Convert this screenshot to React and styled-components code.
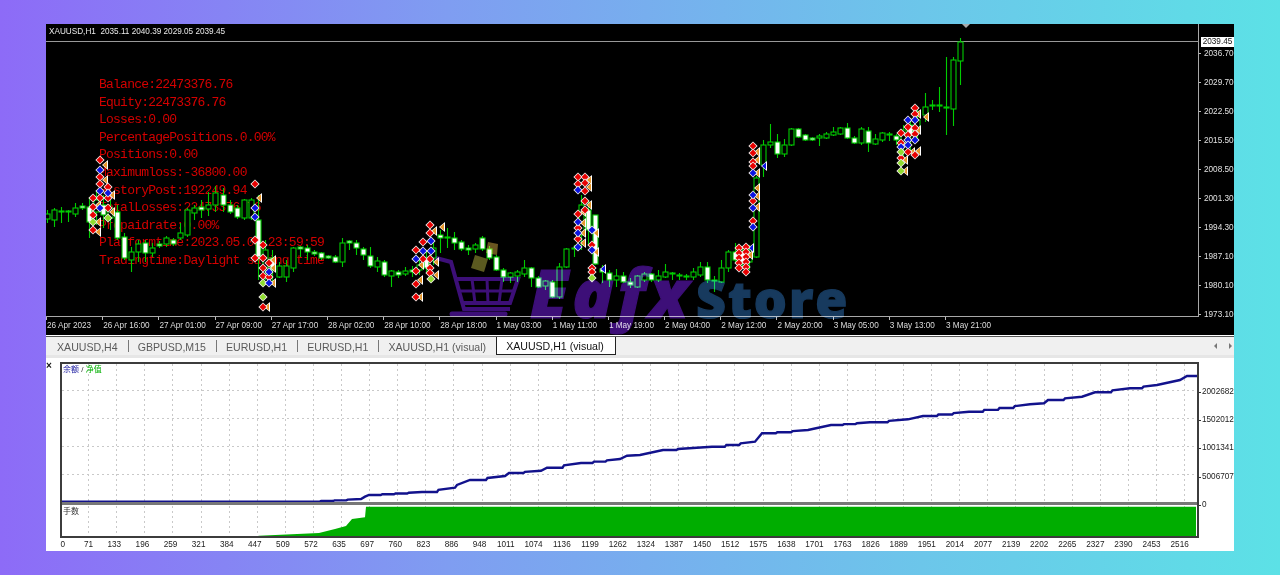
import { Fragment } from "react";
import styled, { createGlobalStyle } from "styled-components";

const GREEN = "#00cc00";
const RED = "#e80000";
const BLUE = "#0a14e0";
const LIME = "#8fdc30";

// [bar index, high, body top, body bottom, low, kind] in page pixels. h = hollow, w = white
const CANDLES = [
  [0, 210, 214, 219, 223, "h"], [1, 208, 210, 220, 227, "h"], [2, 207, 211, 212, 223, "w"], [3, 210, 211, 212, 222, "w"],
  [4, 203, 208, 214, 217, "h"], [5, 203, 206, 208, 210, "w"], [6, 197, 207, 222, 238, "w"], [7, 190, 200, 212, 225, "h"],
  [8, 195, 205, 215, 228, "w"], [9, 200, 208, 218, 230, "h"], [10, 205, 212, 238, 240, "w"], [11, 233, 237, 258, 260, "w"],
  [12, 247, 252, 260, 272, "h"], [13, 240, 244, 252, 262, "h"], [14, 240, 243, 253, 262, "w"], [15, 243, 248, 253, 257, "h"],
  [16, 241, 244, 246, 248, "w"], [17, 236, 238, 244, 247, "h"], [18, 238, 240, 244, 246, "w"], [19, 223, 233, 238, 240, "h"],
  [20, 208, 210, 235, 237, "h"], [21, 205, 208, 213, 220, "h"], [22, 200, 207, 210, 218, "w"], [23, 192, 205, 209, 216, "h"],
  [24, 186, 193, 205, 212, "h"], [25, 188, 195, 205, 212, "w"], [26, 200, 205, 212, 214, "w"], [27, 205, 208, 217, 219, "w"],
  [28, 199, 200, 218, 220, "h"], [29, 198, 200, 218, 220, "h"], [30, 195, 220, 257, 280, "w"], [31, 240, 250, 268, 280, "h"],
  [32, 250, 258, 270, 285, "w"], [33, 262, 266, 277, 278, "h"], [34, 260, 266, 277, 282, "h"], [35, 247, 248, 268, 272, "h"],
  [36, 246, 247, 249, 257, "w"], [37, 245, 248, 252, 260, "w"], [38, 250, 252, 254, 256, "w"], [39, 252, 253, 258, 260, "w"],
  [40, 255, 256, 258, 259, "w"], [41, 255, 257, 262, 263, "w"], [42, 238, 243, 262, 267, "h"], [43, 240, 241, 243, 250, "w"],
  [44, 240, 243, 248, 255, "w"], [45, 247, 249, 255, 260, "w"], [46, 247, 256, 266, 268, "w"], [47, 257, 261, 267, 272, "h"],
  [48, 260, 262, 275, 277, "w"], [49, 270, 271, 276, 287, "h"], [50, 270, 272, 275, 278, "w"], [51, 267, 271, 274, 276, "h"],
  [52, 266, 270, 272, 277, "w"], [53, 260, 265, 270, 275, "h"], [54, 250, 258, 268, 272, "w"], [55, 240, 248, 258, 265, "h"],
  [56, 230, 235, 238, 253, "w"], [57, 228, 237, 238, 248, "w"], [58, 232, 238, 243, 250, "w"], [59, 240, 242, 249, 251, "w"],
  [60, 245, 248, 250, 255, "w"], [61, 243, 245, 249, 253, "h"], [62, 236, 238, 249, 251, "w"], [63, 246, 249, 258, 260, "w"],
  [64, 255, 257, 270, 271, "w"], [65, 268, 270, 277, 282, "w"], [66, 272, 273, 277, 283, "h"], [67, 270, 272, 276, 282, "h"],
  [68, 260, 268, 274, 277, "h"], [69, 267, 268, 278, 287, "w"], [70, 276, 278, 287, 288, "w"], [71, 280, 281, 286, 290, "h"],
  [72, 280, 282, 297, 298, "w"], [73, 263, 267, 297, 299, "h"], [74, 248, 249, 267, 268, "h"], [75, 245, 248, 249, 257, "w"],
  [76, 195, 205, 235, 250, "h"], [77, 200, 210, 230, 245, "w"], [78, 215, 215, 264, 265, "w"], [79, 265, 269, 272, 283, "w"],
  [80, 270, 273, 280, 287, "w"], [81, 269, 276, 280, 287, "h"], [82, 272, 276, 282, 283, "w"], [83, 278, 282, 285, 288, "w"],
  [84, 275, 276, 287, 288, "h"], [85, 272, 274, 280, 282, "h"], [86, 273, 274, 280, 282, "w"], [87, 270, 276, 280, 282, "h"],
  [88, 264, 272, 277, 278, "h"], [89, 272, 273, 274, 280, "w"], [90, 273, 275, 276, 280, "w"], [91, 274, 276, 277, 280, "w"],
  [92, 268, 272, 277, 280, "h"], [93, 262, 267, 275, 277, "h"], [94, 262, 267, 280, 283, "w"], [95, 276, 280, 281, 292, "w"],
  [96, 260, 268, 282, 283, "h"], [97, 250, 252, 268, 272, "h"], [98, 243, 252, 260, 262, "w"], [99, 248, 252, 262, 268, "w"],
  [100, 245, 250, 262, 270, "h"], [101, 176, 178, 257, 258, "h"], [102, 140, 145, 165, 177, "h"], [103, 124, 142, 145, 148, "h"],
  [104, 134, 142, 154, 158, "w"], [105, 139, 145, 154, 157, "h"], [106, 128, 129, 145, 146, "h"], [107, 128, 129, 137, 138, "w"],
  [108, 134, 135, 140, 141, "w"], [109, 137, 138, 140, 141, "w"], [110, 134, 136, 138, 146, "h"], [111, 132, 134, 138, 139, "h"],
  [112, 127, 132, 135, 136, "h"], [113, 127, 128, 134, 135, "h"], [114, 123, 128, 138, 139, "w"], [115, 136, 138, 143, 144, "w"],
  [116, 127, 129, 143, 145, "h"], [117, 127, 131, 143, 152, "w"], [118, 134, 139, 144, 145, "h"], [119, 132, 133, 140, 142, "h"],
  [120, 132, 134, 135, 141, "w"], [121, 134, 136, 140, 145, "w"], [122, 125, 130, 145, 160, "h"], [123, 118, 125, 135, 150, "w"],
  [124, 108, 120, 130, 140, "h"], [125, 93, 107, 115, 122, "h"], [126, 100, 105, 106, 110, "w"], [127, 87, 105, 106, 112, "w"],
  [128, 57, 107, 108, 135, "w"], [129, 57, 60, 109, 126, "h"], [130, 38, 42, 61, 85, "h"],
];

const col = (x, ys, color) => ys.map(y => [x, y, color]);

const DIAMONDS = [
  ...col(100, [160, 177, 184, 198], RED), ...col(100, [170, 191, 208], BLUE),
  ...col(108, [187, 198, 208], RED), ...col(108, [193], BLUE), ...col(108, [218], LIME),
  ...col(93, [198, 207, 215, 230], RED), ...col(93, [222], LIME),
  ...col(255, [184, 240, 258], RED), ...col(255, [208, 217], BLUE),
  ...col(263, [245, 258, 268, 276], RED), ...col(263, [283, 297], LIME), ...col(263, [307], RED),
  ...col(269, [263, 277], RED), ...col(269, [272, 283], BLUE),
  ...col(430, [225, 233, 259, 268, 273], RED), ...col(431, [241, 251], BLUE), ...col(431, [279], LIME),
  ...col(423, [242, 259], RED), ...col(423, [251], BLUE),
  ...col(416, [250, 271, 284, 297], RED), ...col(416, [259], BLUE),
  ...col(578, [177, 184, 214, 228, 239], RED), ...col(578, [190, 222, 233, 247], BLUE),
  ...col(585, [177, 183, 191, 201, 210], RED),
  ...col(592, [245, 268, 272], RED), ...col(592, [230, 250], BLUE), ...col(592, [278], LIME),
  ...col(753, [146, 153, 162, 166, 201, 221], RED), ...col(753, [173, 195, 208, 227], BLUE),
  ...col(739, [248, 253, 258, 263, 268], RED), ...col(746, [247, 252, 257, 262, 267, 272], RED),
  ...col(901, [133, 143, 158], RED), ...col(901, [147], BLUE), ...col(901, [152, 163, 171], LIME),
  ...col(908, [127, 135, 152], RED), ...col(908, [120, 140, 145], BLUE),
  ...col(915, [108, 114, 128, 134, 155], RED), ...col(915, [120, 140], BLUE),
];

const ARROWS = [
  [105, 165], [105, 180], [112, 195], [98, 205], [112, 212], [98, 222], [98, 232], [259, 198], [273, 260], [273, 268],
  [273, 283], [267, 307], [442, 227], [434, 231], [421, 265], [420, 280], [420, 297], [436, 262], [436, 275],
  [589, 180], [589, 187], [589, 205], [583, 212], [583, 223], [583, 233], [583, 243], [596, 233], [596, 252],
  [757, 152], [757, 160], [757, 173], [757, 188], [757, 196], [757, 207], [750, 255], [926, 117], [918, 114],
  [918, 130], [918, 151], [905, 160], [905, 171], [912, 152],
];

const BLUE_ARROWS = [[603, 269], [764, 166], [751, 248]];

const STATS = [
  "Balance:22473376.76",
  "Equity:22473376.76",
  "Losses:0.00",
  "PercentagePositions.0.00%",
  "Positions:0.00",
  "Maximumloss:-36800.00",
  "HistoryPost:192249.94",
  "TotalLosses:22473376.76",
  "Prepaidrate:0.00%",
  "Platformtime:2023.05.03 23:59:59",
  "Tradingtime:Daylight saving time",
];

const PRICES = ["2036.70", "2029.70", "2022.50", "2015.50", "2008.50", "2001.30", "1994.30", "1987.10", "1980.10", "1973.10"];

const TIMES = [
  "26 Apr 2023", "26 Apr 16:00", "27 Apr 01:00", "27 Apr 09:00", "27 Apr 17:00", "28 Apr 02:00", "28 Apr 10:00", "28 Apr 18:00",
  "1 May 03:00", "1 May 11:00", "1 May 19:00", "2 May 04:00", "2 May 12:00", "2 May 20:00", "3 May 05:00", "3 May 13:00", "3 May 21:00",
];

const TABS = ["XAUUSD,H4", "GBPUSD,M15", "EURUSD,H1", "EURUSD,H1", "XAUUSD,H1 (visual)"];

const TRADES = [
  0, 71, 133, 196, 259, 321, 384, 447, 509, 572, 635, 697, 760, 823, 886, 948, 1011, 1074, 1136, 1199, 1262, 1324, 1387, 1450, 1512,
  1575, 1638, 1701, 1763, 1826, 1889, 1951, 2014, 2077, 2139, 2202, 2265, 2327, 2390, 2453, 2516,
];

const BALANCE = [
  [62, 501.7], [308, 501.7], [361, 499], [365, 496.7], [369, 495], [422, 492], [455, 487.7], [457, 485], [470, 480], [505, 476],
  [509, 473], [541, 470.7], [547, 467.7], [581, 463], [620, 459], [627, 455.7], [640, 455], [663, 450], [693, 448], [712, 446.7],
  [755, 441.7], [762, 433.3], [808, 430], [831, 425], [870, 422.3], [908, 419.3], [923, 416], [969, 411.7], [1030, 404.3],
  [1044, 403.3], [1048, 400], [1082, 396.7], [1095, 392.3], [1130, 388.3], [1157, 385], [1180, 380], [1187, 376], [1197, 376],
];

const VOLUME = "258,537 259,536.7 319,534 335,530 346,527 352,520 365,518.3 366,507.7 1196,507.7 1196,537";

// the balance climbs in small stairs, not in straight runs
const stairs = points => {
  const out = [];
  points.forEach(([x, y], i) => {
    const next = points[i + 1];
    out.push(`${x},${y}`);
    if (!next) return;
    const run = next[0] - x;
    const steps = Math.floor(run / 13);
    for (let s = 1; s < steps; s++) {
      const px = x + (run * s) / steps;
      const py = y + ((next[1] - y) * s) / steps;
      out.push(`${px - 1.5},${y + ((next[1] - y) * (s - 1)) / steps}`, `${px},${py}`);
    }
  });
  return out.join(" ");
};

const GlobalStyle = createGlobalStyle`
  html, body {
    margin: 0;
    height: 575px;
    overflow: hidden;
  }
  body {
    background: linear-gradient(90deg, #8d6bf7 0%, #7f9df1 35%, #6cc6ea 72%, #5ce1e6 100%);
    font-family: "Liberation Sans", Arial, sans-serif;
  }
`;

const Shot = styled.div`
  width: 1188px;
  height: 527px;
  margin: 24px 46px;
  background: #fff;
  display: flex;
  flex-direction: column;
  filter: blur(0.3px);
`;

const Chart = styled.div`
  position: relative;
  height: 311px;
  background: #000;
  display: grid;
  grid-template-columns: 1153px 35px;
  grid-template-rows: 293px 18px;
`;

const Plot = styled.div`
  position: relative;
  border-right: 1px solid #a8a8a8;
  border-bottom: 1px solid #a8a8a8;
  box-sizing: content-box;
  width: 1152px;
  height: 292px;
`;

const Symbol = styled.div`
  padding: 3px 0 0 3px;
  font-size: 8.2px;
  line-height: 10px;
  color: #e8e8e8;
  white-space: pre;
`;

const Stats = styled.div`
  margin: 39px 0 0 53px;
  font-family: "Liberation Mono", monospace;
  font-size: 13px;
  letter-spacing: -0.77px;
  line-height: 17.6px;
  color: #d40000;
`;

const Layer = styled.svg`
  position: absolute;
  left: 0;
  top: 0;
  ${({ $blend }) => $blend && "mix-blend-mode: screen;"}
`;

const PriceAxis = styled.div`
  position: relative;
  display: flex;
  flex-direction: column;
  padding-top: 24px;
`;

const Price = styled.div`
  position: relative;
  flex: 0 0 29px;
  line-height: 11px;
  font-size: 8.2px;
  color: #e0e0e0;
  padding-left: 5px;
  &::before {
    content: "";
    position: absolute;
    left: 0;
    top: 5px;
    width: 2px;
    height: 1px;
    background: #bbb;
  }
`;

const PriceTag = styled.div`
  position: absolute;
  right: 0;
  top: 13px;
  width: 33px;
  height: 10px;
  background: #fff;
  color: #111;
  font-size: 8.2px;
  line-height: 10px;
  text-align: center;
`;

const TimeAxis = styled.div`
  display: flex;
`;

const Time = styled.div`
  position: relative;
  flex: 0 0 56.2px;
  padding: 4px 0 0 1px;
  box-sizing: border-box;
  font-size: 8.2px;
  line-height: 10px;
  color: #dcdcdc;
  white-space: nowrap;
  &::before {
    content: "";
    position: absolute;
    left: 0;
    top: 0;
    width: 1px;
    height: 3px;
    background: #bbb;
  }
`;

const Watermark = styled.div`
  position: absolute;
  left: 484px;
  top: 244px;
  display: flex;
  align-items: baseline;
  gap: 4px;
  pointer-events: none;
  mix-blend-mode: screen;
`;

const Brand = styled.span`
  font-family: "Open Sans", sans-serif;
  font-weight: 800;
  font-style: ${({ $italic }) => ($italic ? "italic" : "normal")};
  font-size: ${({ $size }) => $size}px;
  line-height: 48px;
  letter-spacing: ${({ $track }) => $track}px;
  color: ${({ $color }) => $color};
  -webkit-text-stroke: 1.2px ${({ $color }) => $color};
`;

const TabBar = styled.div`
  margin-top: 1px;
  height: 18px;
  background: #f0f0f0;
  border-top: 1px solid #555;
  display: flex;
  align-items: stretch;
  padding-left: 2px;
`;

const Tab = styled.div`
  padding: 1px 10px 0 9px;
  font-size: 10.6px;
  line-height: 18px;
  white-space: nowrap;
  color: #5a5a5a;
`;

const ActiveTab = styled(Tab)`
  box-sizing: border-box;
  width: 120px;
  padding: 0 0 0 9px;
  color: #111;
  background: #fff;
  border: 1px solid #222;
  border-top: none;
`;

const Sep = styled.span`
  align-self: center;
  width: 1px;
  height: 12px;
  background: #777;
`;

const Nav = styled.div`
  margin-left: auto;
  display: flex;
  align-items: center;
  gap: 12px;
  padding-right: 2px;
`;

const Arrow = styled.span`
  width: 0;
  height: 0;
  border-top: 3px solid transparent;
  border-bottom: 3px solid transparent;
  ${({ $right }) => ($right ? "border-left: 3px solid #777;" : "border-right: 3px solid #777;")}
`;

const Graphs = styled.div`
  flex: 1;
  display: flex;
  border-top: 3px solid #e6e6e6;
  padding-top: 4px;
`;

const Gutter = styled.div`
  flex: 0 0 14px;
  font-size: 10px;
  font-weight: 700;
  line-height: 8px;
  color: #111;
`;

const GraphColumn = styled.div`
  flex: 0 0 1139px;
`;

const Frame = styled.div`
  box-sizing: border-box;
  height: 176px;
  border: 2px solid #3c3c3c;
  display: flex;
  flex-direction: column;
`;

const Pane = styled.div`
  height: ${({ $height }) => $height}px;
  position: relative;
`;

const PaneDrawing = styled.svg`
  display: block;
`;

const Splitter = styled.div`
  height: 3px;
  background: #777;
  margin-bottom: 1px;
`;

const Legend = styled.div`
  position: absolute;
  left: 1px;
  top: 1px;
  font-family: "Liberation Sans", "Noto Sans CJK SC", sans-serif;
  font-size: 8px;
  line-height: 10px;
  color: #333;
`;

const LegendPart = styled.span`
  color: ${({ $color }) => $color};
`;

const TradeAxis = styled.div`
  display: flex;
  height: 13px;
`;

const Trade = styled.div`
  flex: 0 0 28.1px;
  text-align: right;
  font-size: 8.2px;
  line-height: 13px;
  color: #222;
  white-space: nowrap;
  &:first-child {
    flex: 0 0 5px;
  }
`;

const ValueAxis = styled.div`
  flex: 1;
  padding-top: 25px;
`;

const Value = styled.div`
  position: relative;
  height: 28.2px;
  padding-left: 3px;
  font-size: 8.2px;
  line-height: 10px;
  color: #222;
  &::before {
    content: "";
    position: absolute;
    left: 0;
    top: 5px;
    width: 2px;
    height: 1px;
    background: #333;
  }
`;

const Candles = () => (
  <g>
    {CANDLES.map(([i, hi, top, bot, lo, kind]) => {
      const x = Math.round(47 + 7.02 * i) + 0.5;
      return (
        <g key={i} stroke={GREEN} strokeWidth="1.1">
          <line x1={x} x2={x} y1={hi} y2={lo} />
          <rect x={x - 2.5} y={top} width="5" height={Math.max(bot - top, 1)} fill={kind === "w" ? "#fff" : "#000"} />
        </g>
      );
    })}
  </g>
);

const Flag = ({ x, y, color }) => (
  <g>
    <polygon points={`${x + 3},${y - 5} ${x + 3},${y + 5} ${x - 3},${y}`} fill="#fff" />
    <polygon points={`${x + 2},${y - 3.5} ${x + 2},${y + 3.5} ${x - 2},${y}`} fill={color} />
  </g>
);

const Trades = () => (
  <g>
    {ARROWS.map(([x, y], i) => (
      <Flag key={i} x={x} y={y} color="#e6962a" />
    ))}
    {BLUE_ARROWS.map(([x, y], i) => (
      <Flag key={i} x={x} y={y} color={BLUE} />
    ))}
    {DIAMONDS.map(([x, y, color], i) => (
      <g key={i}>
        <polygon points={`${x},${y - 4.6} ${x + 4.6},${y} ${x},${y + 4.6} ${x - 4.6},${y}`} fill="#f4f0ee" />
        <polygon points={`${x},${y - 3.4} ${x + 3.4},${y} ${x},${y + 3.4} ${x - 3.4},${y}`} fill={color} />
      </g>
    ))}
  </g>
);

const Cart = () => (
  <Layer $blend width="1153" height="293" viewBox="46 24 1153 293">
    <g fill="none" stroke="#3d0f78" strokeWidth="4">
      <path d="M436 258 L451 262 L464 309 L510 309" />
      <path d="M455 279 L518 279 L510 303 L462 303" />
      <path d="M458 291 L514 291" strokeWidth="3" />
      <path d="M472 279 L475 303 M487 279 L488 303 M502 279 L499 303" strokeWidth="3" />
    </g>
    <path d="M452 314 L505 314" stroke="#3d0f78" strokeWidth="5" strokeLinecap="round" />
    <polygon points="475,255 488,259 484,272 471,268" fill="#5b5a20" />
    <polygon points="488,242 498,244 497,255 486,253" fill="#6a5620" />
  </Layer>
);

const GridLines = ({ top, bottom, rows = [] }) => (
  <g stroke="#c9c9c9" strokeDasharray="2 3" strokeWidth="1">
    {TRADES.slice(1).map((_, i) => {
      const x = Math.round(60 + 28.1 * (i + 1)) + 0.5;
      return <line key={i} x1={x} x2={x} y1={top} y2={bottom} />;
    })}
    {rows.map(y => (
      <line key={y} x1="62" x2="1197" y1={y} y2={y} />
    ))}
  </g>
);

const App = () => (
  <>
    <GlobalStyle />
    <Shot>
      <Chart>
        <Plot>
          <Symbol>XAUUSD,H1  2035.11 2040.39 2029.05 2039.45</Symbol>
          <Stats>
            {STATS.map(line => (
              <div key={line}>{line}</div>
            ))}
          </Stats>
          <Layer width="1153" height="293" viewBox="46 24 1153 293">
            <line x1="46" x2="1199" y1="41.5" y2="41.5" stroke="#999" />
            <polygon points="962,24 970,24 966,28" fill="#a9a9a9" />
            <Candles />
            <Trades />
          </Layer>
          <Cart />
        </Plot>
        <PriceAxis>
          <PriceTag>2039.45</PriceTag>
          {PRICES.map(p => (
            <Price key={p}>{p}</Price>
          ))}
        </PriceAxis>
        <TimeAxis>
          {TIMES.map(t => (
            <Time key={t}>{t}</Time>
          ))}
        </TimeAxis>
        <Watermark>
          <Brand $italic $size={68} $track={4} $color="#3d0f78">Eafx</Brand>
          <Brand $size={52} $track={2} $color="#173a5e">Store</Brand>
        </Watermark>
      </Chart>
      <TabBar>
        {TABS.map((t, i) => (
          <Fragment key={i}>
            <Tab>{t}</Tab>
            {i < TABS.length - 1 && <Sep />}
          </Fragment>
        ))}
        <ActiveTab>XAUUSD,H1 (visual)</ActiveTab>
        <Nav>
          <Arrow />
          <Arrow $right />
        </Nav>
      </TabBar>
      <Graphs>
        <Gutter>×</Gutter>
        <GraphColumn>
          <Frame>
            <Pane $height={138}>
              <PaneDrawing width="1135" height="138" viewBox="62 364 1135 138">
                <GridLines top={364} bottom={502} rows={[390.5, 418.5, 446.5, 474.5]} />
                <polyline points={stairs(BALANCE)} fill="none" stroke="#12128c" strokeWidth="2.4" />
              </PaneDrawing>
              <Legend>
                <LegendPart $color="#1a1aa0">余额</LegendPart> / <LegendPart $color="#00b000">净值</LegendPart>
              </Legend>
            </Pane>
            <Splitter />
            <Pane $height={30}>
              <PaneDrawing width="1135" height="30" viewBox="62 507 1135 30">
                <GridLines top={507} bottom={537} />
                <polygon points={VOLUME} fill="#00ad00" />
              </PaneDrawing>
              <Legend>手数</Legend>
            </Pane>
          </Frame>
          <TradeAxis>
            {TRADES.map(n => (
              <Trade key={n}>{n}</Trade>
            ))}
          </TradeAxis>
        </GraphColumn>
        <ValueAxis>
          <Value>2002682</Value>
          <Value>1502012</Value>
          <Value>1001341</Value>
          <Value>5006707</Value>
          <Value>0</Value>
        </ValueAxis>
      </Graphs>
    </Shot>
  </>
);

export default App;
